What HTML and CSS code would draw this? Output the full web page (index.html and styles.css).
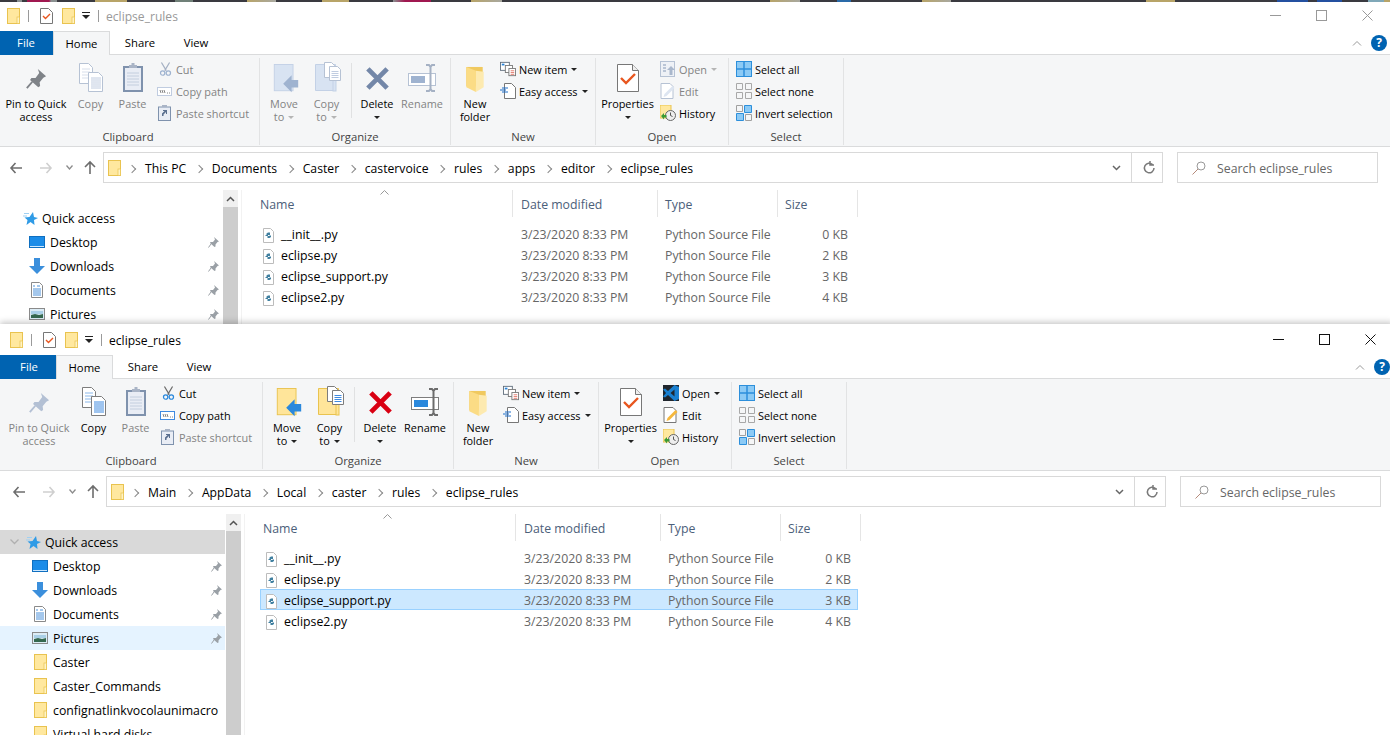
FILE: index.html
```html
<!DOCTYPE html>
<html>
<head>
  <meta charset="utf-8">
  <title>eclipse_rules</title>
  <link rel="stylesheet" href="styles.css">
</head>
<body>
  <!-- shared icons -->
  <svg class="defs" width="0" height="0">
    <symbol id="folder" viewBox="0 0 13 16">
      <rect x=".5" y=".5" width="12" height="15" fill="#ffe89f" stroke="#e9c34f"/>
      <rect x="10" y="9" width="2.5" height="6.5" fill="#fff3c4" stroke="#e9c34f" stroke-width=".7"/>
    </symbol>
    <symbol id="props-sm" viewBox="0 0 13 16">
      <path d="M.5.5h8l4 4v11H.5z" fill="#fff" stroke="#777"/>
      <path d="M3 8l2.5 2.5L10 6" fill="none" stroke="#e8561f" stroke-width="1.4"/>
    </symbol>
    <symbol id="qat-drop" viewBox="0 0 8 7">
      <rect y="0" width="8" height="1" fill="#222"/>
      <path d="M0 3h8L4 7z" fill="#222"/>
    </symbol>
    <symbol id="pin" viewBox="0 0 24 24">
      <path d="M14 1l9 8-3 1.500-4 5 .5 4-2 1.500-9-8 1.500-2h4.500l4-5.500z" fill="var(--steel)"/>
      <path d="M8 15L2 22" stroke="var(--steel)" stroke-width="2"/>
    </symbol>
    <symbol id="copy" viewBox="0 0 24 29">
      <path d="M.5.5h9l4 4v16H.5z" fill="#fff" stroke="var(--edge)"/>
      <path d="M3 6h8M3 9h8M3 12h8M3 15h8" stroke="var(--line)" opacity=".6"/>
      <path d="M9.500 9.500h10l4 4v15h-14z" fill="#fff" stroke="var(--edge)"/>
      <path d="M12 15h10M12 17h10M12 19h10M12 21h10M12 23h10M12 25h10" stroke="var(--line)"/>
    </symbol>
    <symbol id="paste" viewBox="0 0 20 29">
      <rect x="1" y="4" width="18" height="24" fill="#e9edf5" stroke="var(--paper)" stroke-width="2"/>
      <path d="M4 10h12M4 13h12M4 16h12M4 19h12M4 22h12" stroke="#c3cede"/>
      <path d="M6 5V2h2.500V0h3v2H14v3z" fill="#a9b4c6"/>
    </symbol>
    <symbol id="cut" viewBox="0 0 16 18">
      <path d="M3 1l6 10M13 1L7 11" stroke="var(--steel)" stroke-width="1.500" fill="none"/>
      <circle cx="4.500" cy="14" r="2.700" fill="none" stroke="var(--arrow)" stroke-width="1.500"/>
      <circle cx="11.500" cy="14" r="2.700" fill="none" stroke="var(--arrow)" stroke-width="1.500"/>
    </symbol>
    <symbol id="path" viewBox="0 0 15 9">
      <rect x=".5" y=".5" width="14" height="8" fill="#fff" stroke="var(--line)"/>
      <path d="M3 3l1 3M5 3l1 3M7 3l1 3M10 6h1M12 6h1" stroke="#666" stroke-width=".8"/>
    </symbol>
    <symbol id="shortcut" viewBox="0 0 13 16">
      <rect x=".5" y="2" width="12" height="13.500" fill="#e9edf5" stroke="var(--paper)"/>
      <path d="M4 2V0h5v2z" fill="#a9b4c6"/>
      <path d="M4 11V8.500L6.500 6H5V5h4v4H8V7L5.500 9.500V11z" fill="#5a6f8f"/>
    </symbol>
    <symbol id="move" viewBox="0 0 26 32">
      <rect x=".5" y=".5" width="20" height="28" fill="var(--fold)" stroke="var(--fold-edge)"/>
      <path d="M10 21L19 12v5h7v8h-7v5z" fill="var(--arrow)"/>
    </symbol>
    <symbol id="copyto" viewBox="0 0 26 30">
      <path d="M.5 2.500h20v26H.5z" fill="var(--fold)" stroke="var(--fold-edge)"/>
      <rect x="18" y="17" width="3" height="12" fill="var(--fold)" stroke="var(--fold-edge)"/>
      <path d="M9.500.5h7l3 3v12h-10z" fill="#fff" stroke="var(--edge)"/>
      <path d="M14.500 4.500h8l3 3v11h-11z" fill="#fff" stroke="var(--edge)"/>
      <path d="M16.500 9.500h7M16.500 11.500h7M16.500 13.500h7M16.500 15.500h7" stroke="var(--line)"/>
    </symbol>
    <symbol id="delete" viewBox="0 0 26 26">
      <path d="M3 3l20 20M23 3L3 23" stroke="var(--cross)" stroke-width="5"/>
    </symbol>
    <symbol id="rename" viewBox="0 0 28 28">
      <rect x=".5" y="9.500" width="27" height="12" fill="#fff" stroke="var(--edge)"/>
      <rect x="3" y="12" width="14" height="7" fill="var(--arrow)"/>
      <path d="M18 1h3l1.500 2L24 1h3M22.500 3v22M18 27h3l1.500-2 1.500 2h3" fill="none" stroke="var(--steel)" stroke-width="2"/>
    </symbol>
    <symbol id="newfolder" viewBox="0 0 20 28">
      <path d="M1 1h17v20H1z" fill="#f0c95f"/>
      <path d="M1 1l10 4v22L1 22z" fill="#fbdc85"/>
      <path d="M11 5l8 1v16l-8 5z" fill="#fdeab0"/>
    </symbol>
    <symbol id="newitem" viewBox="0 0 18 16">
      <rect x=".5" y=".5" width="10" height="9" fill="#fff" stroke="#5d6b7a"/>
      <rect x="2" y="2" width="3" height="2" fill="#2a84d8"/>
      <rect x="6" y="4" width="8" height="8" fill="#fff" stroke="#777"/>
      <rect x="10" y="7.500" width="7.500" height="8" fill="#fff" stroke="#777"/>
      <path d="M12 10h4M12 12h4M12 14h4" stroke="#d9503f" stroke-width=".8"/>
    </symbol>
    <symbol id="easy" viewBox="0 0 16 16">
      <path d="M4.500.5h7l4 4v11h-11z" fill="#fff" stroke="#777"/>
      <path d="M2 5h6M0 7h6M2 9h6" stroke="#1f6fc9" stroke-width="1.200"/>
    </symbol>
    <symbol id="props" viewBox="0 0 22 28">
      <path d="M.5.5h15l6 6v21H.5z" fill="#fff" stroke="#777"/>
      <path d="M15.500.5v6h6" fill="#eee" stroke="#777"/>
      <path d="M4 14l5 5 9-9" fill="none" stroke="#e8561f" stroke-width="2.400"/>
    </symbol>
    <symbol id="open-off" viewBox="0 0 16 16">
      <rect x=".5" y=".5" width="14" height="15" fill="#eef1f6" stroke="#b6c2d4"/>
      <path d="M3 4h3M3 7h3M3 10h3" stroke="#a9b7cc" stroke-width="1.500"/>
      <path d="M11 5l4 4h-2.500v5h-3V9H7z" fill="#a9b7cc"/>
    </symbol>
    <symbol id="vscode" viewBox="0 0 16 16">
      <rect width="16" height="16" fill="#20262d"/>
      <path d="M11.500 0L16 2v12l-4.500 2L5 10l-3 2.500L0 11.500 3 8 0 4.500 2 3.500 5 6z" fill="#1a80d0"/>
      <path d="M11.500 4.500L7.500 8l4 3.500z" fill="#20262d"/>
    </symbol>
    <symbol id="edit" viewBox="0 0 15 16">
      <path d="M.5.500h9l3 3v12H.5z" fill="#fff" stroke="var(--pencil-edge)"/>
      <path d="M3 14l1-3 8-8 2 2-8 8z" fill="var(--pencil)"/>
    </symbol>
    <symbol id="history" viewBox="0 0 16 16">
      <rect width="11" height="13" fill="#ffe89f" stroke="#e9c34f"/>
      <circle cx="10.500" cy="10.500" r="5" fill="#eee" stroke="#666"/>
      <path d="M10.500 7.500v3l2 1" fill="none" stroke="#555"/>
      <path d="M1 11l3-3v2h2.500v2.500H4v2z" fill="#3a9a35"/>
    </symbol>
    <symbol id="sel-all" viewBox="0 0 16 16">
      <rect x=".5" y=".5" width="15" height="15" fill="#8ccaf5" stroke="#2c8fdb"/>
      <path d="M8 0v16M0 8h16" stroke="#2c8fdb" stroke-width="1.500"/>
    </symbol>
    <symbol id="sel-none" viewBox="0 0 16 16">
      <path d="M.5.500h6v6h-6zM9.500.500h6v6h-6zM.5 9.500h6v6h-6zM9.500 9.500h6v6h-6z" fill="none" stroke="#a8a8a8"/>
    </symbol>
    <symbol id="sel-inv" viewBox="0 0 16 16">
      <path d="M.5.500h6v6h-6zM9.500 9.500h6v6h-6z" fill="none" stroke="#a0a0a0"/>
      <path d="M8.500.500h7v7h-7zM.5 8.500h7v7h-7z" fill="#8ccaf5" stroke="#2c8fdb"/>
    </symbol>
    <symbol id="star" viewBox="0 0 15 15">
      <path d="M10 1l1 5 4 1-4 2 .5 5-4-3-4 3 1-5-3-2.500 5-.5z" fill="#2f9be6"/>
      <path d="M0 5h4M1 2.500h5" stroke="#9fd0f2"/>
    </symbol>
    <symbol id="desktop" viewBox="0 0 16 12">
      <rect x=".5" y=".5" width="15" height="11" fill="#1b8ce8" stroke="#0f6fc0"/>
      <path d="M1 10.500h14" stroke="#cde8ff"/>
    </symbol>
    <symbol id="downloads" viewBox="0 0 16 16">
      <path d="M5 0h6v8h5l-8 8-8-8h5z" fill="#3b8fdc"/>
    </symbol>
    <symbol id="documents" viewBox="0 0 12 16">
      <path d="M.5.500h8l3 3v12H.5z" fill="#fff" stroke="#8a8a8a"/>
      <path d="M6 4h3M2 7h8M2 9h8M2 11h8M2 13h8M3 3v2" stroke="#4a90d9"/>
    </symbol>
    <symbol id="pictures" viewBox="0 0 16 12">
      <rect x=".5" y=".5" width="15" height="11" fill="#dcecf5" stroke="#8a8a8a"/>
      <path d="M2 7l4-1 4 1 4-1v4H2z" fill="#35684f"/>
      <path d="M2 3h12v3H2z" fill="#a9cfe6"/>
    </symbol>
    <symbol id="nav-pin" viewBox="0 0 11 11">
      <path d="M6 0l5 4.500-1.500.5-2 2.500v2l-1 .5-4.500-4 .5-1h2.500l2-2.500z" fill="#9aa0a6"/>
      <path d="M3 7L.5 10.500" stroke="#9aa0a6"/>
    </symbol>
    <symbol id="py" viewBox="0 0 11 15">
      <path d="M.5.500h7l3 3v11H.5z" fill="#fff" stroke="#bcbcbc"/>
      <path d="M3.500 7V5.500L5 4.500h2V7H5v1H2.500V7zM8 7.500V9L6.500 10h-2V8H6.500V7.500z" fill="#3f7f9f"/>
    </symbol>
  </svg>

  <!-- window behind, inactive -->
  <section class="window back">
    <div class="wallpaper"></div>
    <header class="titlebar">
      <svg class="qat-folder"><use href="#folder"/></svg>
      <i class="qat-sep"></i>
      <svg class="qat-props"><use href="#props-sm"/></svg>
      <svg class="qat-folder2"><use href="#folder"/></svg>
      <svg class="qat-drop"><use href="#qat-drop"/></svg>
      <i class="qat-sep sep2"></i>
      <span class="win-title">eclipse_rules</span>
      <div class="win-btns">
        <span class="win-btn"><svg width="11" height="11"><path d="M0 5.500h11" stroke="#999"/></svg></span>
        <span class="win-btn"><svg width="11" height="11"><rect x=".5" y=".5" width="10" height="10" fill="none" stroke="#999"/></svg></span>
        <span class="win-btn"><svg width="11" height="11"><path d="M.5.500l10 10M10.500.500l-10 10" stroke="#999"/></svg></span>
      </div>
    </header>
    <nav class="tabs">
      <span class="tab-file">File</span>
      <span class="tab tab-on">Home</span>
      <span class="tab">Share</span>
      <span class="tab">View</span>
      <svg class="ribbon-toggle" width="10" height="6"><path d="M1 5.500l4-4 4 4" fill="none" stroke="#9a9a9a"/></svg>
      <span class="help">?</span>
    </nav>
    <div class="ribbon">
      <div class="group clipboard">
        <div class="group-body">
          <div class="big pin-btn"><svg class="i-pin"><use href="#pin"/></svg><span>Pin to Quick<br>access</span></div>
          <div class="big copy-btn off"><svg class="i-copy dim"><use href="#copy"/></svg><span>Copy</span></div>
          <div class="big paste-btn off"><svg class="i-paste"><use href="#paste"/></svg><span>Paste</span></div>
          <div class="small-col">
            <div class="small off"><svg class="s-ic dim"><use href="#cut"/></svg>Cut</div>
            <div class="small off"><svg class="s-ic dim s-path"><use href="#path"/></svg>Copy path</div>
            <div class="small off"><svg class="s-ic s-short"><use href="#shortcut"/></svg>Paste shortcut</div>
          </div>
        </div>
        <div class="group-name">Clipboard</div>
      </div>
      <div class="group organize">
        <div class="group-body">
          <div class="big move-btn off"><svg class="i-move dim"><use href="#move"/></svg><span>Move<br>to <b class="caret pale"></b></span></div>
          <div class="big copyto-btn off"><svg class="i-copyto dim"><use href="#copyto"/></svg><span>Copy<br>to <b class="caret pale"></b></span></div>
          <i class="rib-sep"></i>
          <div class="big delete-btn"><svg class="i-delete dim"><use href="#delete"/></svg><span>Delete<br><b class="caret"></b></span></div>
          <div class="big rename-btn off"><svg class="i-rename dim"><use href="#rename"/></svg><span>Rename</span></div>
        </div>
        <div class="group-name">Organize</div>
      </div>
      <div class="group newgroup">
        <div class="group-body">
          <div class="big newfolder-btn"><svg class="i-newfolder"><use href="#newfolder"/></svg><span>New<br>folder</span></div>
          <div class="small-col">
            <div class="small"><svg class="s-wide"><use href="#newitem"/></svg>New item <b class="caret side"></b></div>
            <div class="small"><svg class="s-wide"><use href="#easy"/></svg>Easy access <b class="caret side"></b></div>
          </div>
        </div>
        <div class="group-name">New</div>
      </div>
      <div class="group opengroup">
        <div class="group-body">
          <div class="big props-btn"><svg class="i-props"><use href="#props"/></svg><span>Properties<br><b class="caret"></b></span></div>
          <div class="small-col">
            <div class="small off"><svg class="s-wide"><use href="#open-off"/></svg>Open <b class="caret side pale"></b></div>
            <div class="small off"><svg class="s-wide dim"><use href="#edit"/></svg>Edit</div>
            <div class="small"><svg class="s-wide"><use href="#history"/></svg>History</div>
          </div>
        </div>
        <div class="group-name">Open</div>
      </div>
      <div class="group selectgroup">
        <div class="group-body">
          <div class="small-col">
            <div class="small"><svg class="s-sel"><use href="#sel-all"/></svg>Select all</div>
            <div class="small"><svg class="s-sel"><use href="#sel-none"/></svg>Select none</div>
            <div class="small"><svg class="s-sel"><use href="#sel-inv"/></svg>Invert selection</div>
          </div>
        </div>
        <div class="group-name">Select</div>
      </div>
    </div>
    <div class="addressrow">
      <div class="navbtns">
        <svg class="nav-back" width="12" height="12"><path d="M5.500 1L1 6l4.500 5M1 6h11" fill="none" stroke="#6d6d6d" stroke-width="1.600"/></svg>
        <svg class="nav-fwd" width="12" height="12"><path d="M6.500 1L11 6l-4.500 5M11 6H0" fill="none" stroke="#cfcfcf" stroke-width="1.600"/></svg>
        <svg class="nav-down" width="7" height="5"><path d="M.5.500L3.500 4l3-3.500" fill="none" stroke="#8c8c8c" stroke-width="1.300"/></svg>
        <svg class="nav-up" width="12" height="13"><path d="M1 6l5-5 5 5M6 1v12" fill="none" stroke="#6d6d6d" stroke-width="1.600"/></svg>
      </div>
      <div class="addressbox">
        <svg class="addr-folder"><use href="#folder"/></svg>
        <span class="crumb">This PC</span>
        <span class="crumb">Documents</span>
        <span class="crumb">Caster</span>
        <span class="crumb">castervoice</span>
        <span class="crumb">rules</span>
        <span class="crumb">apps</span>
        <span class="crumb">editor</span>
        <span class="crumb">eclipse_rules</span>
        <svg class="addr-drop" width="9" height="6"><path d="M1 1l3.500 3.500L8 1" fill="none" stroke="#666" stroke-width="1.500"/></svg>
      </div>
      <div class="refresh"><svg width="12" height="13"><path d="M9.500 3.500A4.800 4.800 0 1 0 11 7M7 0v4h4" fill="none" stroke="#7a7a7a" stroke-width="1.500"/></svg></div>
      <div class="searchbox">
        <svg width="14" height="14"><circle cx="9" cy="5" r="4" fill="none" stroke="#999"/><path d="M6 8L.5 13.500" stroke="#b58a7a"/></svg>
        <span>Search eclipse_rules</span>
      </div>
    </div>
    <div class="content">
      <aside class="navpane">
        <div class="tree">
          <div class="row-qa"><svg class="t-star"><use href="#star"/></svg>Quick access</div>
          <div class="row"><svg class="t-wide"><use href="#desktop"/></svg>Desktop<svg class="t-pin"><use href="#nav-pin"/></svg></div>
          <div class="row"><svg class="t-wide"><use href="#downloads"/></svg>Downloads<svg class="t-pin"><use href="#nav-pin"/></svg></div>
          <div class="row"><svg class="t-doc"><use href="#documents"/></svg>Documents<svg class="t-pin"><use href="#nav-pin"/></svg></div>
          <div class="row"><svg class="t-wide"><use href="#pictures"/></svg>Pictures<svg class="t-pin"><use href="#nav-pin"/></svg></div>
        </div>
        <div class="scrollbar"><div class="scroll-up"><svg width="9" height="6"><path d="M1 5l3.500-3.500L8 5" fill="none" stroke="#555" stroke-width="1.500"/></svg></div><div class="scroll-thumb"></div></div>
      </aside>
      <main class="filelist">
        <div class="list-head">
          <span>Name</span><span>Date modified</span><span>Type</span><span>Size</span>
          <svg class="sort-caret" width="9" height="5"><path d="M.5 4.500L4.500.5l4 4" fill="none" stroke="#999"/></svg>
        </div>
        <div class="file"><span class="fname"><svg class="py"><use href="#py"/></svg>__init__.py</span><span>3/23/2020 8:33 PM</span><span>Python Source File</span><span class="fsize">0 KB</span></div>
        <div class="file"><span class="fname"><svg class="py"><use href="#py"/></svg>eclipse.py</span><span>3/23/2020 8:33 PM</span><span>Python Source File</span><span class="fsize">2 KB</span></div>
        <div class="file"><span class="fname"><svg class="py"><use href="#py"/></svg>eclipse_support.py</span><span>3/23/2020 8:33 PM</span><span>Python Source File</span><span class="fsize">3 KB</span></div>
        <div class="file"><span class="fname"><svg class="py"><use href="#py"/></svg>eclipse2.py</span><span>3/23/2020 8:33 PM</span><span>Python Source File</span><span class="fsize">4 KB</span></div>
      </main>
    </div>
  </section>

  <!-- window in front, active -->
  <section class="window front">
    <header class="titlebar">
      <svg class="qat-folder"><use href="#folder"/></svg>
      <i class="qat-sep"></i>
      <svg class="qat-props"><use href="#props-sm"/></svg>
      <svg class="qat-folder2"><use href="#folder"/></svg>
      <svg class="qat-drop"><use href="#qat-drop"/></svg>
      <i class="qat-sep sep2"></i>
      <span class="win-title">eclipse_rules</span>
      <div class="win-btns">
        <span class="win-btn"><svg width="11" height="11"><path d="M0 5.500h11" stroke="#111"/></svg></span>
        <span class="win-btn"><svg width="11" height="11"><rect x=".5" y=".5" width="10" height="10" fill="none" stroke="#111"/></svg></span>
        <span class="win-btn"><svg width="11" height="11"><path d="M.5.500l10 10M10.500.500l-10 10" stroke="#111"/></svg></span>
      </div>
    </header>
    <nav class="tabs">
      <span class="tab-file">File</span>
      <span class="tab tab-on">Home</span>
      <span class="tab">Share</span>
      <span class="tab">View</span>
      <svg class="ribbon-toggle" width="10" height="6"><path d="M1 5.500l4-4 4 4" fill="none" stroke="#9a9a9a"/></svg>
      <span class="help">?</span>
    </nav>
    <div class="ribbon">
      <div class="group clipboard">
        <div class="group-body">
          <div class="big pin-btn off"><svg class="i-pin dim"><use href="#pin"/></svg><span>Pin to Quick<br>access</span></div>
          <div class="big copy-btn"><svg class="i-copy"><use href="#copy"/></svg><span>Copy</span></div>
          <div class="big paste-btn off"><svg class="i-paste"><use href="#paste"/></svg><span>Paste</span></div>
          <div class="small-col">
            <div class="small"><svg class="s-ic"><use href="#cut"/></svg>Cut</div>
            <div class="small"><svg class="s-ic s-path"><use href="#path"/></svg>Copy path</div>
            <div class="small off"><svg class="s-ic s-short"><use href="#shortcut"/></svg>Paste shortcut</div>
          </div>
        </div>
        <div class="group-name">Clipboard</div>
      </div>
      <div class="group organize">
        <div class="group-body">
          <div class="big move-btn"><svg class="i-move"><use href="#move"/></svg><span>Move<br>to <b class="caret"></b></span></div>
          <div class="big copyto-btn"><svg class="i-copyto"><use href="#copyto"/></svg><span>Copy<br>to <b class="caret"></b></span></div>
          <i class="rib-sep"></i>
          <div class="big delete-btn"><svg class="i-delete"><use href="#delete"/></svg><span>Delete<br><b class="caret"></b></span></div>
          <div class="big rename-btn"><svg class="i-rename"><use href="#rename"/></svg><span>Rename</span></div>
        </div>
        <div class="group-name">Organize</div>
      </div>
      <div class="group newgroup">
        <div class="group-body">
          <div class="big newfolder-btn"><svg class="i-newfolder"><use href="#newfolder"/></svg><span>New<br>folder</span></div>
          <div class="small-col">
            <div class="small"><svg class="s-wide"><use href="#newitem"/></svg>New item <b class="caret side"></b></div>
            <div class="small"><svg class="s-wide"><use href="#easy"/></svg>Easy access <b class="caret side"></b></div>
          </div>
        </div>
        <div class="group-name">New</div>
      </div>
      <div class="group opengroup">
        <div class="group-body">
          <div class="big props-btn"><svg class="i-props"><use href="#props"/></svg><span>Properties<br><b class="caret"></b></span></div>
          <div class="small-col">
            <div class="small"><svg class="s-wide"><use href="#vscode"/></svg>Open <b class="caret side"></b></div>
            <div class="small"><svg class="s-wide"><use href="#edit"/></svg>Edit</div>
            <div class="small"><svg class="s-wide"><use href="#history"/></svg>History</div>
          </div>
        </div>
        <div class="group-name">Open</div>
      </div>
      <div class="group selectgroup">
        <div class="group-body">
          <div class="small-col">
            <div class="small"><svg class="s-sel"><use href="#sel-all"/></svg>Select all</div>
            <div class="small"><svg class="s-sel"><use href="#sel-none"/></svg>Select none</div>
            <div class="small"><svg class="s-sel"><use href="#sel-inv"/></svg>Invert selection</div>
          </div>
        </div>
        <div class="group-name">Select</div>
      </div>
    </div>
    <div class="addressrow">
      <div class="navbtns">
        <svg class="nav-back" width="12" height="12"><path d="M5.500 1L1 6l4.500 5M1 6h11" fill="none" stroke="#6d6d6d" stroke-width="1.600"/></svg>
        <svg class="nav-fwd" width="12" height="12"><path d="M6.500 1L11 6l-4.500 5M11 6H0" fill="none" stroke="#cfcfcf" stroke-width="1.600"/></svg>
        <svg class="nav-down" width="7" height="5"><path d="M.5.500L3.500 4l3-3.500" fill="none" stroke="#8c8c8c" stroke-width="1.300"/></svg>
        <svg class="nav-up" width="12" height="13"><path d="M1 6l5-5 5 5M6 1v12" fill="none" stroke="#6d6d6d" stroke-width="1.600"/></svg>
      </div>
      <div class="addressbox">
        <svg class="addr-folder"><use href="#folder"/></svg>
        <span class="crumb">Main</span>
        <span class="crumb">AppData</span>
        <span class="crumb">Local</span>
        <span class="crumb">caster</span>
        <span class="crumb">rules</span>
        <span class="crumb">eclipse_rules</span>
        <svg class="addr-drop" width="9" height="6"><path d="M1 1l3.500 3.500L8 1" fill="none" stroke="#666" stroke-width="1.500"/></svg>
      </div>
      <div class="refresh"><svg width="12" height="13"><path d="M9.500 3.500A4.800 4.800 0 1 0 11 7M7 0v4h4" fill="none" stroke="#7a7a7a" stroke-width="1.500"/></svg></div>
      <div class="searchbox">
        <svg width="14" height="14"><circle cx="9" cy="5" r="4" fill="none" stroke="#999"/><path d="M6 8L.5 13.500" stroke="#b58a7a"/></svg>
        <span>Search eclipse_rules</span>
      </div>
    </div>
    <div class="content">
      <aside class="navpane">
        <div class="tree">
          <div class="row-qa selected"><svg class="t-chev" width="9" height="6"><path d="M.5.500L4.500 4.500 8.500.5" fill="none" stroke="#b0b0b0" stroke-width="1.300"/></svg><svg class="t-star"><use href="#star"/></svg>Quick access</div>
          <div class="row"><svg class="t-wide"><use href="#desktop"/></svg>Desktop<svg class="t-pin"><use href="#nav-pin"/></svg></div>
          <div class="row"><svg class="t-wide"><use href="#downloads"/></svg>Downloads<svg class="t-pin"><use href="#nav-pin"/></svg></div>
          <div class="row"><svg class="t-doc"><use href="#documents"/></svg>Documents<svg class="t-pin"><use href="#nav-pin"/></svg></div>
          <div class="row hover"><svg class="t-wide"><use href="#pictures"/></svg>Pictures<svg class="t-pin"><use href="#nav-pin"/></svg></div>
          <div class="row"><svg class="t-folder"><use href="#folder"/></svg>Caster</div>
          <div class="row"><svg class="t-folder"><use href="#folder"/></svg>Caster_Commands</div>
          <div class="row"><svg class="t-folder"><use href="#folder"/></svg>confignatlinkvocolaunimacro</div>
          <div class="row"><svg class="t-folder"><use href="#folder"/></svg>Virtual hard disks</div>
        </div>
        <div class="scrollbar"><div class="scroll-up"><svg width="9" height="6"><path d="M1 5l3.500-3.500L8 5" fill="none" stroke="#555" stroke-width="1.500"/></svg></div><div class="scroll-thumb"></div></div>
      </aside>
      <main class="filelist">
        <div class="list-head">
          <span>Name</span><span>Date modified</span><span>Type</span><span>Size</span>
          <svg class="sort-caret" width="9" height="5"><path d="M.5 4.500L4.500.5l4 4" fill="none" stroke="#999"/></svg>
        </div>
        <div class="file"><span class="fname"><svg class="py"><use href="#py"/></svg>__init__.py</span><span>3/23/2020 8:33 PM</span><span>Python Source File</span><span class="fsize">0 KB</span></div>
        <div class="file"><span class="fname"><svg class="py"><use href="#py"/></svg>eclipse.py</span><span>3/23/2020 8:33 PM</span><span>Python Source File</span><span class="fsize">2 KB</span></div>
        <div class="file picked"><span class="fname"><svg class="py"><use href="#py"/></svg>eclipse_support.py</span><span>3/23/2020 8:33 PM</span><span>Python Source File</span><span class="fsize">3 KB</span></div>
        <div class="file"><span class="fname"><svg class="py"><use href="#py"/></svg>eclipse2.py</span><span>3/23/2020 8:33 PM</span><span>Python Source File</span><span class="fsize">4 KB</span></div>
      </main>
    </div>
  </section>
</body>
</html>
```

FILE: styles.css
```css
* {
    box-sizing: border-box;
    margin: 0;
    padding: 0;
}

html, body {
    width: 1390px;
    height: 735px;
    overflow: hidden;
    background: #fff;
}

body {
    position: relative;
    font-family: "Open Sans", "Noto Sans", sans-serif;
    font-size: 12.3px;
    color: #000;
}

.defs {
    position: absolute;
}

svg {
    flex: none;
    display: block;
    overflow: visible;
}

/* icon colours, normal state */
svg {
    --edge: #7d7d7d;
    --line: #3f8ae0;
    --fold: #ffe59a;
    --fold-edge: #e9c34f;
    --arrow: #2a88dc;
    --cross: #d90012;
    --steel: #6c6c6c;
    --paper: #7f92ad;
    --pencil: #f5b73c;
    --pencil-edge: #777;
}

svg.i-pin {
    --steel: #7f8388;
}

/* greyed out */
svg.dim {
    --edge: #b6c2d4;
    --line: #c0cce0;
    --fold: #d8e3f2;
    --fold-edge: #c3d1e6;
    --arrow: #9fb3d0;
    --cross: #7387a8;
    --steel: #a5b1c4;
    --pencil: #dde5f1;
    --pencil-edge: #b6c2d4;
}

svg.i-pin.dim {
    --steel: #b3c0d4;
}

.window {
    position: absolute;
    width: 1393px;
    background: #fff;
    overflow: hidden;
}

.back {
    left: -3px;
    top: 0;
    height: 324px;
}

.front {
    left: 0;
    top: 324px;
    height: 411px;
    overflow: visible;
    box-shadow: 0 -2px 6px rgba(0, 0, 0, 0.22);
}

.wallpaper {
    position: absolute;
    left: 3px;
    top: 0;
    width: 1390px;
    height: 2px;
    background: linear-gradient(90deg,
        #3a3a40 17px, #8a9090 17px, #8a9090 22px, #3a3a40 22px,
        #3a3a40 27px, #a01850 27px, #a01850 49px, #8a9090 51px, #8a9090 57px, #3a3a40 57px,
        #3a3a40 95px, #b8a468 95px, #b8a468 127px, #3a3a40 127px,
        #3a3a40 175px, #708078 175px, #708078 193px, #3a3a40 193px,
        #3a3a40 247px, #b8a468 247px, #a8a8a0 276px, #3a3a40 276px,
        #3a3a40 322px, #b8a468 322px, #b8a468 349px, #3a3a40 349px,
        #3a3a40 393px, #8a9090 393px, #a01850 405px, #a01850 431px, #3a3a40 431px,
        #3a3a40 471px, #b8a468 471px, #a8a8a0 502px, #3a3a40 502px,
        #3a3a40 770px, #b8a468 770px, #a8a8a0 800px, #3a3a40 800px,
        #3a3a40 837px, #2a6aa8 837px, #2a6aa8 851px, #3a3a40 851px,
        #3a3a40 922px, #b8a468 922px, #a8a8a0 951px, #3a3a40 951px,
        #3a3a40 1146px, #b8a468 1146px, #b8a468 1175px, #3a3a40 1175px,
        #3a3a40 1277px, #2450a0 1277px, #2450a0 1308px, #3a3a40 1308px,
        #3a3a40 1317px, #2450a0 1317px, #2450a0 1342px, #3a3a40 1342px,
        #3a3a40 1368px, #80a8b8 1368px, #80a8b8 1384px, #b8a468 1384px);
}

/* title bar */
.titlebar {
    display: flex;
    align-items: center;
    height: 31px;
    padding-left: 10px;
}

.qat-folder, .qat-folder2, .qat-props {
    width: 13px;
    height: 16px;
}

.addr-folder, .t-folder {
    width: 13px;
    height: 16px;
}

.qat-sep {
    width: 1px;
    height: 12px;
    margin: 0 11px 0 8px;
    background: #9a9a9a;
}

.qat-folder2 {
    margin-left: 9px;
}

.qat-drop {
    width: 8px;
    height: 7px;
    margin-left: 7px;
}

.sep2 {
    margin-left: 8px;
    margin-right: 7px;
}

.win-title {
    padding-top: 1px;
    font-size: 12.1px;
}

.back .win-title {
    color: #999;
}

.win-btns {
    display: flex;
    margin-left: auto;
    align-self: flex-start;
}

.win-btn {
    display: flex;
    align-items: center;
    justify-content: center;
    width: 46px;
    height: 31px;
}

/* tabs */
.tabs {
    display: flex;
    align-items: center;
    height: 24px;
    border-bottom: 1px solid #dadbdc;
    position: relative;
    font-size: 11.3px;
}

.tab-file {
    width: 56px;
    height: 24px;
    line-height: 23px;
    text-align: center;
    padding-left: 2px;
    background: #0063b1;
    color: #fff;
}

.tab {
    width: 56px;
    height: 24px;
    line-height: 23px;
    text-align: center;
}

.tab-on {
    width: 57px;
    margin-right: 2px;
    background: #f5f6f7;
    border: 1px solid #dadbdc;
    border-bottom: 0;
}

.ribbon-toggle {
    margin-left: auto;
    margin-right: 9px;
}

.help {
    width: 16px;
    height: 16px;
    margin-right: 3px;
    border-radius: 50%;
    background: #0063b1;
    color: #fff;
    font-size: 12px;
    font-weight: 700;
    line-height: 16px;
    text-align: center;
}

/* ribbon */
.ribbon {
    display: flex;
    height: 92px;
    padding-top: 3px;
    padding-bottom: 1px;
    background: #f5f6f7;
    border-bottom: 1px solid #dadbdc;
    font-size: 10.9px;
}

.group {
    display: flex;
    flex-direction: column;
    flex: none;
    border-right: 1px solid #e2e3e4;
}

.clipboard { width: 263px; }
.organize { width: 191px; }
.newgroup { width: 145px; }
.opengroup { width: 133px; }
.selectgroup { width: 115px; }

.group-body {
    display: flex;
    flex: 1;
}

.group-name {
    height: 15px;
    margin-bottom: 1px;
    text-align: center;
    line-height: 15px;
    font-size: 11.3px;
    color: #444;
}

.big {
    display: flex;
    flex-direction: column;
    align-items: center;
    flex: none;
    height: 71px;
    text-align: center;
    line-height: 13px;
}

.big svg {
    margin-bottom: auto;
}

.big span {
    height: 26px;
    margin-bottom: 6px;
    white-space: nowrap;
}

.off {
    color: #838383;
}

.caret {
    display: inline-block;
    width: 0;
    height: 0;
    margin-left: 1px;
    vertical-align: 2px;
    border-left: 3px solid transparent;
    border-right: 3px solid transparent;
    border-top: 3px solid #222;
}

.caret.pale {
    border-top-color: #b5b5b5;
}

.pin-btn { width: 78px; }
.copy-btn { width: 31px; }
.paste-btn { width: 53px; }
.move-btn { width: 46px; margin-left: 1px; }
.copyto-btn { width: 39px; }
.delete-btn { width: 44px; margin-left: 1px; }
.rename-btn { width: 46px; }
.newfolder-btn { width: 48px; }
.props-btn { width: 63px; }

.i-pin { width: 22px; height: 22px; margin-top: 10px; }
.i-copy { width: 24px; height: 29px; margin-top: 5px; }
.i-paste { width: 20px; height: 29px; margin-top: 5px; }
.i-move { width: 26px; height: 30px; margin-top: 6px; margin-left: 3px; }
.i-copyto { width: 26px; height: 30px; margin-top: 4px; margin-left: 3px; }
.i-delete { width: 25px; height: 25px; margin-top: 8px; }
.i-rename { width: 28px; height: 28px; margin-top: 6px; }
.i-newfolder { width: 20px; height: 27px; margin-top: 8px; }
.i-props { width: 22px; height: 28px; margin-top: 6px; }

.rib-sep {
    width: 1px;
    height: 55px;
    margin: 5px 2px 0 5px;
    background: #e0e1e2;
}

.small-col {
    display: flex;
    flex-direction: column;
}

.small {
    display: flex;
    align-items: center;
    height: 22px;
    white-space: nowrap;
}

.caret.side {
    margin-left: 4px;
}

.s-ic {
    width: 13px;
    height: 16px;
    margin-right: 4px;
}

.s-path {
    width: 15px;
    height: 9px;
    margin-left: -2px;
}

.s-short {
    margin-left: -1px;
    margin-right: 5px;
}

.s-wide {
    width: 16px;
    height: 16px;
    margin-right: 3px;
}

.newgroup .small-col { margin-left: 1px; }
.opengroup .small-col { margin-left: 1px; }
.selectgroup .small-col { margin-left: 7px; }

.s-sel {
    width: 16px;
    height: 16px;
    margin-right: 3px;
}

/* address row */
.addressrow {
    display: flex;
    height: 43px;
    padding-top: 5px;
}

.navbtns {
    display: flex;
    align-items: center;
    height: 31px;
    width: 106px;
    padding-left: 13px;
}

.nav-fwd { margin-left: 18px; }
.nav-down { margin-left: 14px; }
.nav-up { margin-left: 11px; }

.addressbox {
    display: flex;
    align-items: center;
    width: 1029px;
    height: 31px;
    padding-left: 4px;
    padding-right: 10px;
    border: 1px solid #d9d9d9;
}

.crumb {
    padding-top: 1px;
    font-size: 12.2px;
}

.crumb::before {
    content: "";
    display: inline-block;
    width: 5px;
    height: 5px;
    margin: 0 10px 1px 9.6px;
    border-top: 1px solid #888;
    border-right: 1px solid #888;
    transform: rotate(45deg);
}

.addr-folder + .crumb::before {
    margin-left: 8px;
}

.addr-drop {
    margin-left: auto;
}

.refresh {
    display: flex;
    align-items: center;
    justify-content: center;
    width: 31px;
    height: 31px;
    padding-left: 3px;
    border: 1px solid #d9d9d9;
    border-left: 0;
}

.searchbox {
    display: flex;
    align-items: center;
    width: 201px;
    height: 31px;
    margin-left: 14px;
    padding-left: 14px;
    border: 1px solid #d9d9d9;
    color: #666;
}

.searchbox span {
    padding-top: 1px;
    margin-left: 11px;
}

/* nav pane and list */
.content {
    display: flex;
    height: 220px;
}

.front .content {
    height: 221px;
}

.navpane {
    display: flex;
    width: 245px;
    border-right: 1px solid #f2f2f2;
}

.tree {
    width: 226px;
    padding-top: 16px;
}

.row, .row-qa {
    display: flex;
    align-items: center;
    height: 24px;
    padding-left: 33px;
    margin-right: 1px;
    white-space: nowrap;
}

.row-qa {
    padding-left: 26px;
}

.row-qa.selected {
    padding-left: 10px;
    background: #d9d9d9;
}

.row.hover {
    background: #e5f3ff;
}

.t-chev { margin-right: 7px; }
.t-star { width: 15px; height: 15px; margin-right: 4px; }
.t-wide { width: 16px; height: 16px; margin-left: -1px; margin-right: 5px; }
.t-doc { width: 12px; height: 16px; margin-left: 1px; margin-right: 7px; }
.t-folder { margin-left: 1px; margin-right: 6px; }
.t-pin { width: 11px; height: 11px; margin-left: auto; margin-right: 3px; }

.scrollbar {
    width: 15px;
    margin-left: 0;
    background: #f0f0f0;
}

.scroll-up {
    display: flex;
    align-items: center;
    justify-content: center;
    height: 17px;
}

.scroll-thumb {
    height: 240px;
    background: #cdcdcd;
}

.filelist {
    position: relative;
    padding-left: 15px;
}

.list-head, .file {
    display: grid;
    grid-template-columns: 256px 144px 120px 76px;
}

.list-head {
    grid-template-columns: 256px 145px 120px 80px;
    height: 33px;
}

.list-head span {
    height: 27px;
    padding-left: 7px;
    line-height: 29px;
    color: #4c607a;
    border-right: 1px solid #e5e5e5;
}

.list-head span:first-child {
    padding-left: 3px;
}

.list-head span:nth-child(2) {
    padding-left: 8px;
}

.sort-caret {
    position: absolute;
    left: 138px;
    top: 0;
}

.file {
    width: 598px;
    height: 21px;
    line-height: 20px;
    color: #666;
    border: 1px solid transparent;
    white-space: nowrap;
}

.file span {
    padding-left: 7px;
    padding-top: 1px;
}

.fname {
    display: flex;
    align-items: center;
    color: #000;
}

.file .fname {
    padding-left: 5px;
}

.py {
    width: 11px;
    height: 15px;
    margin-right: 7px;
}

.file .fsize {
    padding-right: 6px;
    text-align: right;
}

.picked {
    background: #cce8ff;
    border-color: #99d1ff;
}
```
